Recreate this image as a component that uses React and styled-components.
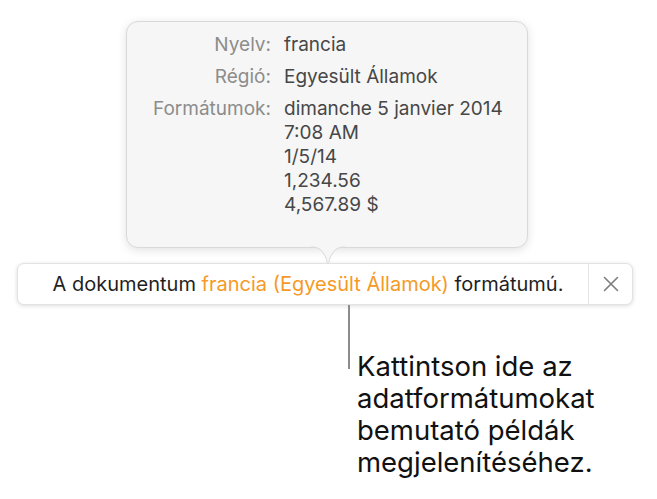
import React from 'react';
import styled, { createGlobalStyle } from 'styled-components';

const GlobalStyle = createGlobalStyle`
  html, body {
    margin: 0;
    padding: 0;
    background: #ffffff;
  }

  body {
    font-family: Inter, Roboto, "Liberation Sans", sans-serif;
    -webkit-font-smoothing: antialiased;
  }
`;

const Page = styled.div`
  width: 657px;
  height: 499px;
  display: flex;
  flex-direction: column;
  overflow: hidden;
`;

const Popover = styled.div`
  position: relative;
  box-sizing: border-box;
  width: 402px;
  height: 227px;
  margin: 21px 0 0 126px;
  padding: 11px 0 0 0;
  background: #f6f6f6;
  border: 1px solid #d9d9d9;
  border-radius: 12px;
  box-shadow: 0 2px 10px rgba(0, 0, 0, 0.12);
`;

const Arrow = styled.svg`
  position: absolute;
  left: 184px;
  bottom: -19px;
  width: 34px;
  height: 20px;
  overflow: visible;
`;

const InfoGrid = styled.div`
  display: grid;
  grid-template-columns: 144px auto;
  column-gap: 13px;
  row-gap: 8px;
  font-size: 19px;
  line-height: 24px;
`;

const Label = styled.div`
  text-align: right;
  color: #8c8c8c;
  white-space: nowrap;
`;

const Value = styled.div`
  color: #474747;
  white-space: nowrap;
`;

const Banner = styled.div`
  box-sizing: border-box;
  width: 616px;
  height: 42px;
  margin: 15px 0 0 17px;
  display: flex;
  align-items: stretch;
  background: #ffffff;
  border: 1px solid #e2e2e2;
  border-radius: 7px;
  box-shadow: 0 1px 4px rgba(0, 0, 0, 0.14);
`;

const Message = styled.div`
  flex: 1;
  display: flex;
  align-items: center;
  justify-content: center;
  padding-left: 10px;
  font-size: 20px;
  color: #1f1f1f;
  white-space: nowrap;
`;

const Highlight = styled.span`
  color: #f59a26;
`;

const CloseButton = styled.button`
  width: 44px;
  display: flex;
  align-items: center;
  justify-content: center;
  padding: 0;
  background: none;
  border: none;
  border-left: 1px solid #e4e4e4;
  cursor: pointer;
`;

const Callout = styled.div`
  display: flex;
  margin-left: 348px;
`;

const Leader = styled.div`
  width: 2px;
  height: 64px;
  background: #8c8c8c;
`;

const CalloutText = styled.div`
  margin: 45px 0 0 7px;
  font-size: 27.5px;
  line-height: 32px;
  color: #111111;
`;

const rows = [
  { label: 'Nyelv:', values: ['francia'] },
  { label: 'Régió:', values: ['Egyesült Államok'] },
  {
    label: 'Formátumok:',
    values: ['dimanche 5 janvier 2014', '7:08 AM', '1/5/14', '1,234.56', '4,567.89 $'],
  },
];

const App = () => (
  <Page>
    <GlobalStyle />
    <Popover>
      <InfoGrid>
        {rows.map((row) => (
          <React.Fragment key={row.label}>
            <Label>{row.label}</Label>
            <Value>
              {row.values.map((v) => (
                <div key={v}>{v}</div>
              ))}
            </Value>
          </React.Fragment>
        ))}
      </InfoGrid>
      <Arrow viewBox="0 0 34 20">
        <path
          d="M0 1 C8 1 11 4 14 10 C15.5 13 16.2 17.5 17 17.5 C17.8 17.5 18.5 13 20 10 C23 4 26 1 34 1 Z"
          fill="#f6f6f6"
        />
        <path
          d="M0 1 C8 1 11 4 14 10 C15.5 13 16.2 17.5 17 17.5 C17.8 17.5 18.5 13 20 10 C23 4 26 1 34 1"
          fill="none"
          stroke="#d9d9d9"
          strokeWidth="1"
        />
      </Arrow>
    </Popover>

    <Banner>
      <Message>
        A dokumentum&nbsp;<Highlight>francia (Egyesült Államok)</Highlight>&nbsp;formátumú.
      </Message>
      <CloseButton aria-label="Bezárás">
        <svg width="16" height="16" viewBox="0 0 16 16">
          <path d="M1.5 1.5 L14.5 14.5 M14.5 1.5 L1.5 14.5" stroke="#7d7d7d" strokeWidth="1.6" strokeLinecap="round" />
        </svg>
      </CloseButton>
    </Banner>

    <Callout>
      <Leader />
      <CalloutText>
        Kattintson ide az
        <br />
        adatformátumokat
        <br />
        bemutató példák
        <br />
        megjelenítéséhez.
      </CalloutText>
    </Callout>
  </Page>
);

export default App;
